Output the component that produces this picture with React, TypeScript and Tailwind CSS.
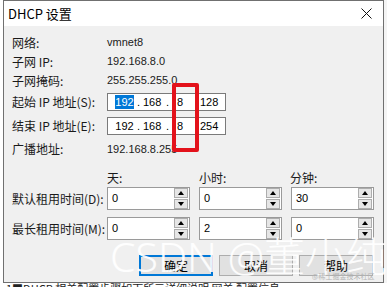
import React from "react";

const cjk = { fontFamily: '"Noto Sans CJK SC", "Liberation Sans", sans-serif' };
const lat = { fontFamily: '"Liberation Sans", "Noto Sans CJK SC", sans-serif' };

function Label({ children }: { children: React.ReactNode }) {
  return (
    <div className="w-[95px] shrink-0 text-[12px] text-[#1a1a1a] leading-none" style={cjk}>
      {children}
    </div>
  );
}

function IpBox({ first, last, sel }: { first: string; last: string; sel?: boolean }) {
  return (
    <div
      className="w-[119px] h-[18px] border border-[#7a7a7a] bg-white flex items-center text-[11px] text-black leading-none"
      style={lat}
    >
      <span className="w-[7px]" />
      <span className={`w-[19px] h-[14px] flex items-center justify-center ${sel ? "bg-[#0078d7] text-white" : ""}`}>192</span>
      <span className="w-[9px] text-center">.</span>
      <span className="w-[18px] text-center">168</span>
      <span className="w-[13px] text-center">.</span>
      <span className="w-[26px] pl-[3px]">8</span>
      <span>{last}</span>
      {first ? null : null}
    </div>
  );
}

function Arrow({ up }: { up?: boolean }) {
  return (
    <div className="w-[14px] h-[10px] bg-[#e6e6e6] border border-[#adadad] flex items-center justify-center">
      <svg width="6" height="4" viewBox="0 0 6 4">
        {up ? <path d="M0 4 L3 0 L6 4 Z" fill="#000" /> : <path d="M0 0 L3 4 L6 0 Z" fill="#000" />}
      </svg>
    </div>
  );
}

function Spin({ v }: { v: string }) {
  return (
    <div className="w-[83px] h-[23px] border border-[#9a9a9a] bg-white flex items-center">
      <div className="flex-1 pl-[4px] text-[11px] text-black leading-none" style={lat}>
        {v}
      </div>
      <div className="flex flex-col gap-[1px] pr-[1px]">
        <Arrow up />
        <Arrow />
      </div>
    </div>
  );
}

function Btn({ children, def }: { children: React.ReactNode; def?: boolean }) {
  return (
    <div
      className={`w-[74px] h-[21px] bg-[#e1e1e1] flex items-center justify-center text-[12px] text-black leading-none ${
        def ? "border-2 border-[#0078d7]" : "border border-[#adadad]"
      }`}
      style={cjk}
    >
      {children}
    </div>
  );
}

export default function App() {
  return (
    <div className="w-[387px] h-[287px] bg-white relative overflow-hidden">
      <div className="flex h-[283px]">
        <div className="w-[3px] shrink-0 bg-white" />
        <div className="w-[381px] h-[283px] border border-[#707070] flex flex-col">
          <div className="h-[25px] bg-white flex items-center justify-between pl-[4px] pr-[11px]">
            <span className="text-[13px] text-black leading-none" style={cjk}>
              DHCP 设置
            </span>
            <svg width="11" height="11" viewBox="0 0 11 11">
              <path d="M0.5 0.5 L10.5 10.5 M10.5 0.5 L0.5 10.5" stroke="#111" strokeWidth="1" />
            </svg>
          </div>
          <div className="flex-1 bg-[#f0f0f0] pl-[8px] pt-[7px] flex flex-col">
            <div className="h-[19px] flex items-center">
              <Label>网络:</Label>
              <span className="text-[11px] text-[#1a1a1a]" style={lat}>vmnet8</span>
            </div>
            <div className="h-[19px] flex items-center">
              <Label>子网 IP:</Label>
              <span className="text-[11px] text-[#1a1a1a]" style={lat}>192.168.8.0</span>
            </div>
            <div className="h-[19px] flex items-center">
              <Label>子网掩码:</Label>
              <span className="text-[11px] text-[#1a1a1a]" style={lat}>255.255.255.0</span>
            </div>
            <div className="mt-[3px] h-[18px] flex items-center">
              <Label>起始 IP 地址(S):</Label>
              <IpBox first="192" last="128" sel />
            </div>
            <div className="mt-[6px] h-[18px] flex items-center">
              <Label>结束 IP 地址(E):</Label>
              <IpBox first="192" last="254" />
            </div>
            <div className="mt-[5px] h-[18px] flex items-center">
              <Label>广播地址:</Label>
              <span className="text-[11px] text-[#1a1a1a]" style={lat}>192.168.8.255</span>
            </div>
            <div className="mt-[11px] h-[18px] flex items-center text-[12px] text-[#1a1a1a] leading-none" style={cjk}>
              <div className="w-[95px]" />
              <div className="w-[92px]">天:</div>
              <div className="w-[91px]">小时:</div>
              <div>分钟:</div>
            </div>
            <div className="h-[23px] flex items-center">
              <Label>默认租用时间(D):</Label>
              <div className="flex gap-[9px]">
                <Spin v="0" />
                <Spin v="0" />
                <Spin v="30" />
              </div>
            </div>
            <div className="mt-[7px] h-[23px] flex items-center">
              <Label>最长租用时间(M):</Label>
              <div className="flex gap-[9px]">
                <Spin v="0" />
                <Spin v="2" />
                <Spin v="0" />
              </div>
            </div>
            <div className="mt-[15px] h-[21px] flex justify-end gap-[6px] pr-[10px]">
              <Btn def>确定</Btn>
              <Btn>取消</Btn>
              <Btn>帮助</Btn>
            </div>
          </div>
        </div>
        <div className="flex-1 bg-[#f4f4f4]" />
      </div>
      <div className="h-[4px] overflow-hidden pl-[6px]">
        <div className="text-[11px] text-[#222] leading-none" style={cjk}>
          1■DHCP 相关配置步骤如下所示详细说明 网关 配置信息
        </div>
      </div>

      <div className="absolute left-[172px] top-[83px] w-[27px] h-[69px] border-[4px] border-[#e3121b] rounded-[2px]" />

      <div
        className="absolute left-[110px] top-[236px] text-[41px] font-light text-white/90 leading-none whitespace-nowrap"
        style={{ fontFamily: '"Noto Sans", "Noto Sans CJK SC", sans-serif' }}
      >
        CSDN @董小纯
      </div>
      <div className="absolute left-[312px] top-[273px] text-[7px] text-[#b5b5b5] leading-none" style={cjk}>
        @稀土掘金技术社区
      </div>
    </div>
  );
}
